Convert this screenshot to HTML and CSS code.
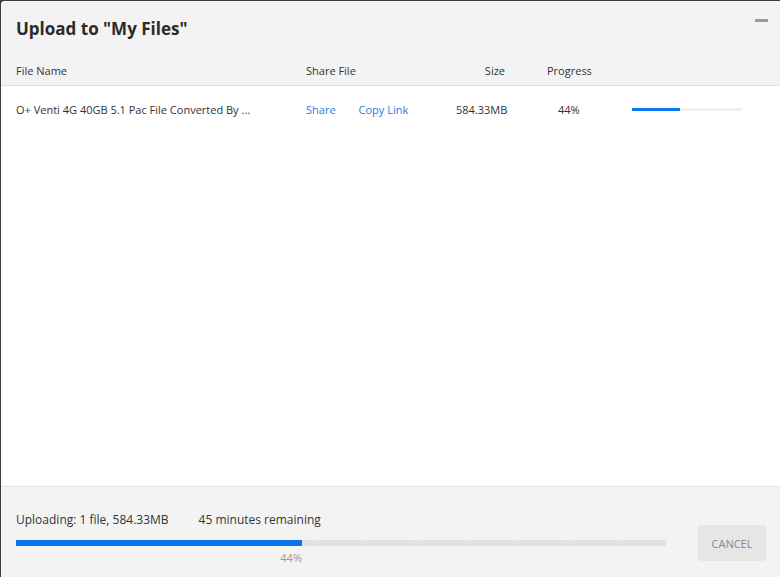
FILE: index.html
```html
<!DOCTYPE html>
<html>
<head>
<meta charset="utf-8">
<link rel="stylesheet" href="styles.css">
</head>
<body>
<div class="dialog">
  <div class="head">
    <div class="title-row">
      <h1 class="title">Upload to "My Files"</h1>
      <span class="minimize"></span>
    </div>
    <div class="grid cols">
      <div>File Name</div>
      <div>Share File</div>
      <div class="right">Size</div>
      <div class="prog-head">Progress</div>
      <div></div>
    </div>
  </div>
  <div class="body">
    <div class="grid row">
      <div class="name">O+ Venti 4G 40GB 5.1 Pac File Converted By ...</div>
      <div class="links"><a class="link">Share</a><a class="link">Copy Link</a></div>
      <div class="right">584.33MB</div>
      <div class="pct">44%</div>
      <div class="mini-bar"><div class="mini-fill" style="width:44%"></div></div>
    </div>
  </div>
  <div class="foot">
    <div class="status">
      <div class="status-text"><span>Uploading: 1 file, 584.33MB</span><span>45 minutes remaining</span></div>
      <div class="bar"><div class="fill" style="width:44%"></div></div>
      <div class="bar-label" style="width:44%">44%</div>
    </div>
    <button class="cancel">CANCEL</button>
  </div>
</div>
</body>
</html>
```
FILE: styles.css
```css
html, body { margin: 0; padding: 0; }
body {
  background: #3a3d42;
  font-family: "Open Sans", "Noto Sans", sans-serif;
  color: #333;
  width: 780px;
  height: 577px;
  overflow: hidden;
}
.dialog {
  margin: 1px 0 0 1px;
  width: 779px;
  height: 576px;
  background: #fff;
  border-radius: 4px 0 0 0;
  display: flex;
  flex-direction: column;
  overflow: hidden;
}
.head { background: #f3f3f3; border-bottom: 1px solid #e2e2e2; }
.title-row {
  height: 55px;
  display: flex;
  justify-content: space-between;
  align-items: flex-start;
  padding: 0 12px 0 15px;
}
.title {
  margin: 16px 0 0;
  font-size: 17px;
  line-height: 24px;
  font-weight: 700;
  color: #2b2b2b;
}
.minimize {
  display: block;
  width: 13px;
  height: 3px;
  margin-top: 18px;
  background: #9a9a9a;
}
.grid {
  display: grid;
  grid-template-columns: 290px 150px 50px 126px 110px;
  align-items: center;
  padding-left: 15px;
  font-size: 11px;
}
.cols { height: 29px; color: #333; }
.right { text-align: right; padding-right: 1px; }
.prog-head { padding-left: 41px; }
.body { flex: 1; }
.row { height: 46px; color: #333; }
.name { white-space: nowrap; }
.links { display: flex; gap: 23px; }
.link { color: #1f7be0; }
.pct { padding-left: 52px; }
.mini-bar { height: 3px; background: #f0f0f0; }
.mini-fill { height: 100%; background: #0a78f2; }
.foot {
  height: 90px;
  background: #f3f3f3;
  border-top: 1px solid #e4e4e4;
  display: flex;
  padding: 0 13px 0 15px;
}
.status { width: 650px; padding-top: 25px; }
.status-text {
  display: flex;
  gap: 30px;
  font-size: 12px;
  line-height: 16px;
  color: #333;
}
.bar {
  margin-top: 12px;
  height: 6px;
  background: repeating-linear-gradient(-60deg, #e1e1e1 0 40px, #e3e3e3 40px 44px);
}
.fill { height: 100%; background: #0a74ea; }
.bar-label {
  margin-top: 5px;
  text-align: right;
  font-size: 11px;
  line-height: 14px;
  color: #999;
}
.cancel {
  margin: 38px 0 0 32px;
  width: 68px;
  height: 36px;
  border: 0;
  border-radius: 3px;
  background: #e6e6e6;
  color: #888;
  font-family: inherit;
  font-size: 11px;
  padding: 0;
}
```
